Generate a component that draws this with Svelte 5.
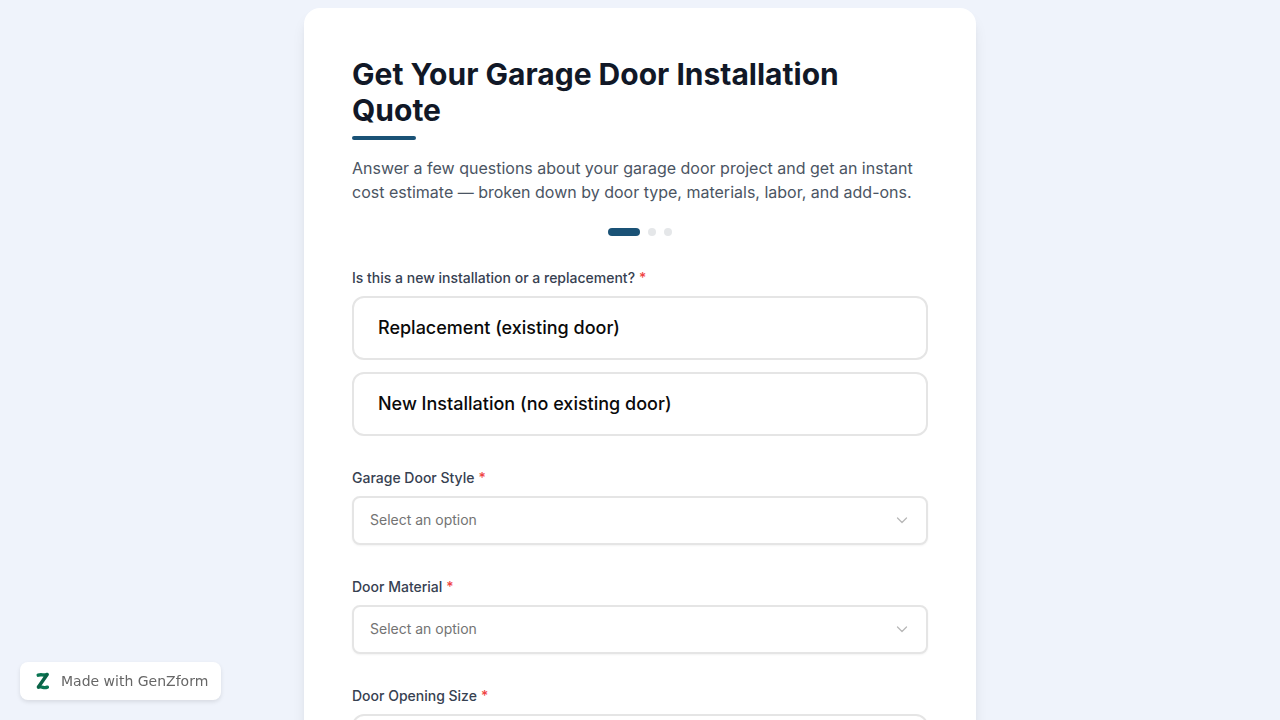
<script>
  const installTypes = ['Replacement (existing door)', 'New Installation (no existing door)'];
  const selects = [
    { id: 'door-style', label: 'Garage Door Style' },
    { id: 'door-material', label: 'Door Material' }
  ];
  const steps = [1, 2, 3];
  let current = $state(1);
  let installType = $state('');
</script>

<main>
  <form class="card">
    <header>
      <h1>Get Your Garage Door Installation Quote</h1>
      <div class="rule"></div>
      <p>Answer a few questions about your garage door project and get an instant cost estimate — broken down by door type, materials, labor, and add-ons.</p>
    </header>

    <div class="steps">
      {#each steps as step}
        <span class="dot" class:active={step === current}></span>
      {/each}
    </div>

    <div class="fields">
      <fieldset>
        <legend class="label">Is this a new installation or a replacement?<span class="required">*</span></legend>
        <div class="choices">
          {#each installTypes as type}
            <label class="choice">
              <input type="radio" name="install-type" value={type} bind:group={installType} />
              <span>{type}</span>
            </label>
          {/each}
        </div>
      </fieldset>

      {#each selects as field}
        <div class="field">
          <label class="label" for={field.id}>{field.label}<span class="required">*</span></label>
          <div class="select">
            <select id={field.id}>
              <option value="">Select an option</option>
            </select>
            <svg viewBox="0 0 20 20" aria-hidden="true"><path d="M5.5 8 10 12.5 14.5 8" /></svg>
          </div>
        </div>
      {/each}

      <div class="field">
        <label class="label" for="opening-size">Door Opening Size<span class="required">*</span></label>
        <input id="opening-size" class="size" type="text" />
      </div>
    </div>
  </form>
</main>

<a class="badge" href="#genzform">
  <svg viewBox="0 0 20 20" aria-hidden="true">
    <path class="z-light" d="M5.2 4.2 Q7.5 3.4 9.6 3.9 T14.2 3.4" />
    <path class="z-light" d="M5.4 16.2 Q8 15.6 10 16.3 T14.4 16.2" />
    <path class="z-dark" d="M13.8 4 L5.6 15.8" />
  </svg>
  <span>Made with GenZform</span>
</a>

<style>
  :global(body) {
    margin: 0;
    background: #eff3fb;
  }

  main {
    box-sizing: border-box;
    min-height: 100vh;
    padding: 8px 16px;
    font-family: Inter, sans-serif;
  }

  .card {
    box-sizing: border-box;
    max-width: 672px;
    margin: 0 auto;
    padding: 48px;
    border-radius: 16px;
    background: #fff;
    box-shadow: 0 10px 15px -3px rgb(0 0 0 / 10%), 0 4px 6px -4px rgb(0 0 0 / 10%);
  }

  h1 {
    margin: 0;
    color: #111827;
    font-size: 30px;
    line-height: 36px;
    font-weight: 700;
  }

  .rule {
    width: 64px;
    height: 4px;
    margin: 8px 0 16px;
    border-radius: 2px;
    background: #1a5276;
  }

  p {
    margin: 0;
    color: #4b5563;
    font-size: 16px;
    line-height: 24px;
  }

  .steps {
    display: flex;
    justify-content: center;
    gap: 8px;
    margin: 24px 0 32px;
  }

  .dot {
    width: 8px;
    height: 8px;
    border-radius: 4px;
    background: #e5e7e9;
  }

  .dot.active {
    width: 32px;
    background: #1a5276;
  }

  .fields {
    display: flex;
    flex-direction: column;
    gap: 32px;
  }

  fieldset {
    min-width: 0;
    margin: 0;
    padding: 0;
    border: 0;
  }

  .label {
    display: block;
    margin-bottom: 8px;
    padding: 0;
    color: #374151;
    font-size: 14px;
    line-height: 20px;
    font-weight: 500;
  }

  .required {
    margin-left: 4px;
    color: #ef4444;
  }

  .choices {
    display: flex;
    flex-direction: column;
    gap: 12px;
  }

  .choice {
    padding: 16px 24px;
    border: 2px solid #e5e5e5;
    border-radius: 12px;
    color: #0a0a0a;
    font-size: 18px;
    line-height: 28px;
    font-weight: 500;
    cursor: pointer;
  }

  .choice input {
    position: absolute;
    opacity: 0;
    pointer-events: none;
  }

  .choice:has(input:checked) {
    border-color: #1a5276;
  }

  .select {
    display: grid;
    align-items: start;
  }

  .select > * {
    grid-area: 1 / 1;
  }

  select {
    appearance: none;
    box-sizing: border-box;
    width: 100%;
    padding: 12px 16px 13px;
    border: 2px solid #e5e5e5;
    border-radius: 8px;
    background: #fff;
    box-shadow: 0 1px 2px rgb(0 0 0 / 5%);
    color: #737373;
    font-family: inherit;
    font-size: 14px;
    line-height: 20px;
  }

  .select svg {
    justify-self: end;
    width: 20px;
    height: 20px;
    margin: 14px 16px 0 0;
    fill: none;
    stroke: #b8b8b8;
    stroke-width: 1.3;
    stroke-linecap: round;
    stroke-linejoin: round;
    pointer-events: none;
  }

  .size {
    box-sizing: border-box;
    width: 100%;
    height: 64px;
    padding: 0 24px;
    border: 2px solid #e5e5e5;
    border-radius: 12px;
    font-family: inherit;
    font-size: 18px;
  }

  .badge {
    position: fixed;
    bottom: 20px;
    left: 20px;
    display: flex;
    align-items: center;
    gap: 8px;
    padding: 9px 13px;
    border-radius: 8px;
    background: #fff;
    box-shadow: 0 2px 4px rgb(0 0 0 / 10%);
    color: #666;
    font-family: "DejaVu Sans", sans-serif;
    font-size: 14px;
    line-height: 20px;
    text-decoration: none;
  }

  .badge svg {
    width: 20px;
    height: 20px;
    fill: none;
    stroke-width: 3.4;
    stroke-linecap: round;
    stroke-linejoin: round;
  }

  .z-dark {
    stroke: #0b6347;
  }

  .z-light {
    stroke: #0a7552;
  }
</style>
